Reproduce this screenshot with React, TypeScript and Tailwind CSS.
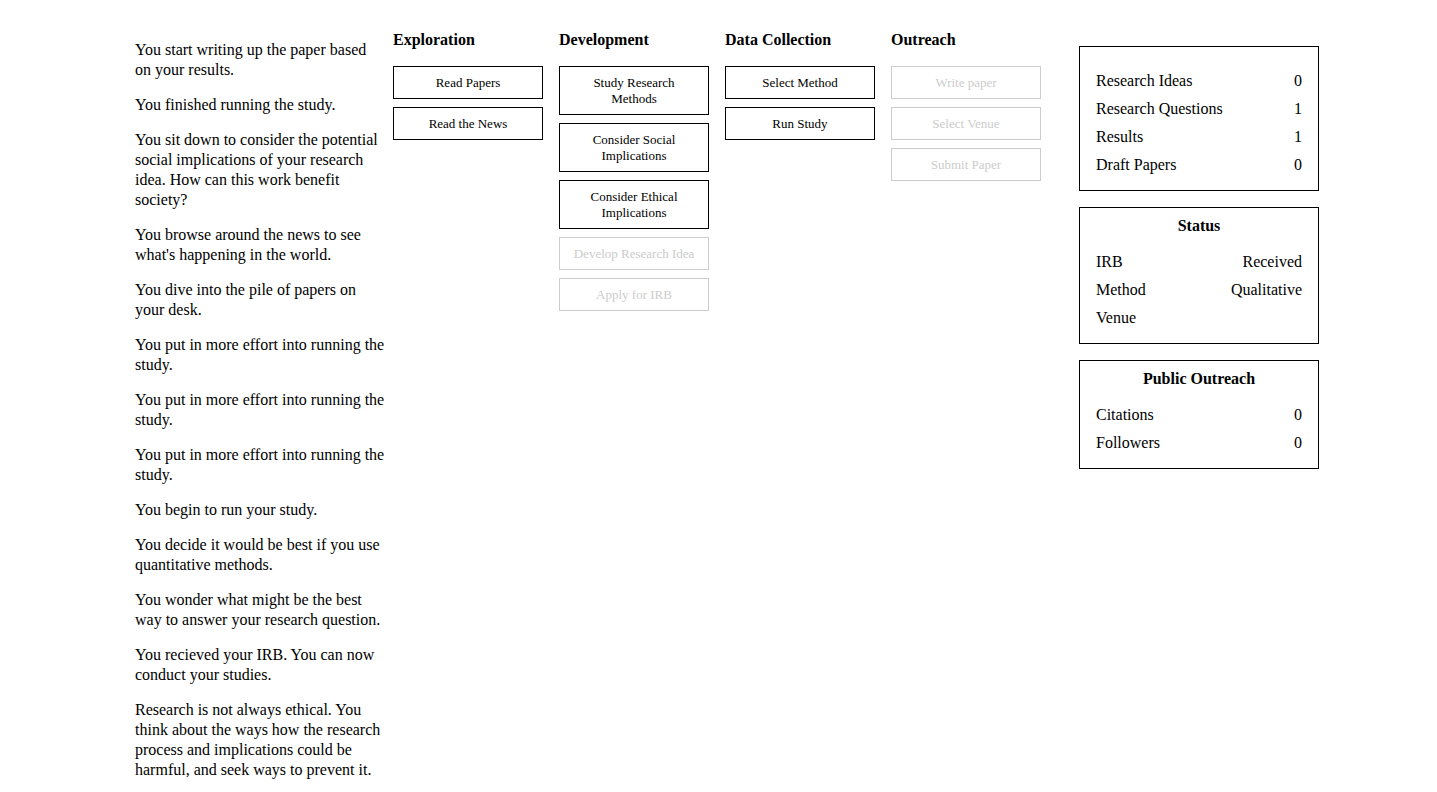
type Action = { label: string; enabled: boolean };
type Stage = { title: string; actions: Action[] };
type Stat = { label: string; value: string };

const log: string[] = [
  "You start writing up the paper based on your results.",
  "You finished running the study.",
  "You sit down to consider the potential social implications of your research idea. How can this work benefit society?",
  "You browse around the news to see what's happening in the world.",
  "You dive into the pile of papers on your desk.",
  "You put in more effort into running the study.",
  "You put in more effort into running the study.",
  "You put in more effort into running the study.",
  "You begin to run your study.",
  "You decide it would be best if you use quantitative methods.",
  "You wonder what might be the best way to answer your research question.",
  "You recieved your IRB. You can now conduct your studies.",
  "Research is not always ethical. You think about the ways how the research process and implications could be harmful, and seek ways to prevent it.",
];

const stages: Stage[] = [
  {
    title: "Exploration",
    actions: [
      { label: "Read Papers", enabled: true },
      { label: "Read the News", enabled: true },
    ],
  },
  {
    title: "Development",
    actions: [
      { label: "Study Research Methods", enabled: true },
      { label: "Consider Social Implications", enabled: true },
      { label: "Consider Ethical Implications", enabled: true },
      { label: "Develop Research Idea", enabled: false },
      { label: "Apply for IRB", enabled: false },
    ],
  },
  {
    title: "Data Collection",
    actions: [
      { label: "Select Method", enabled: true },
      { label: "Run Study", enabled: true },
    ],
  },
  {
    title: "Outreach",
    actions: [
      { label: "Write paper", enabled: false },
      { label: "Select Venue", enabled: false },
      { label: "Submit Paper", enabled: false },
    ],
  },
];

const resources: Stat[] = [
  { label: "Research Ideas", value: "0" },
  { label: "Research Questions", value: "1" },
  { label: "Results", value: "1" },
  { label: "Draft Papers", value: "0" },
];

const status: Stat[] = [
  { label: "IRB", value: "Received" },
  { label: "Method", value: "Qualitative" },
  { label: "Venue", value: "" },
];

const outreach: Stat[] = [
  { label: "Citations", value: "0" },
  { label: "Followers", value: "0" },
];

function StageColumn({ title, actions }: Stage) {
  return (
    <section className="flex w-[150px] flex-col gap-4">
      <h2 className="font-bold">{title}</h2>
      <div className="flex flex-col gap-2">
        {actions.map(({ label, enabled }) => (
          <button
            key={label}
            type="button"
            disabled={!enabled}
            className="cursor-pointer border border-black px-2.5 pt-2 pb-[7px] text-center text-[13px] leading-4 disabled:cursor-default disabled:border-[#cccccc] disabled:text-[#cccccc]"
          >
            {label}
          </button>
        ))}
      </div>
    </section>
  );
}

function StatPanel({ title, stats }: { title?: string; stats: Stat[] }) {
  return (
    <section className={title ? "border border-black px-4 pt-2 pb-[15px]" : "border border-black px-4 pt-6 pb-[15px]"}>
      {title && <h2 className="mb-4 text-center font-bold">{title}</h2>}
      <dl className="flex flex-col gap-2">
        {stats.map(({ label, value }) => (
          <div key={label} className="flex justify-between">
            <dt>{label}</dt>
            <dd>{value}</dd>
          </div>
        ))}
      </dl>
    </section>
  );
}

export default function App() {
  return (
    <div className="mx-auto flex max-w-[1201px] items-start pl-[17px] font-['Liberation_Serif','Times_New_Roman',serif] text-base leading-5 text-black">
      <div className="flex w-[250px] shrink-0 flex-col gap-[15px] pt-10">
        {log.map((entry, i) => (
          <p key={i}>{entry}</p>
        ))}
      </div>
      <main className="flex grow gap-4 pt-[30px] pl-2">
        {stages.map((stage) => (
          <StageColumn key={stage.title} {...stage} />
        ))}
      </main>
      <aside className="flex w-60 shrink-0 flex-col gap-4 pt-[46px]">
        <StatPanel stats={resources} />
        <StatPanel title="Status" stats={status} />
        <StatPanel title="Public Outreach" stats={outreach} />
      </aside>
    </div>
  );
}
